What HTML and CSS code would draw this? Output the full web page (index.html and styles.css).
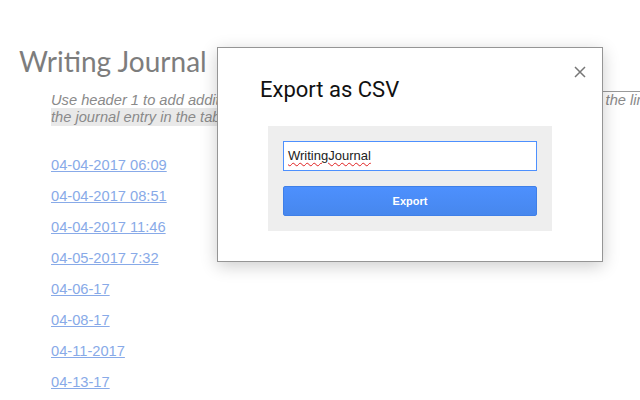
FILE: index.html
```html
<!DOCTYPE html>
<html>
<head>
<meta charset="utf-8">
<link rel="stylesheet" href="styles.css">
</head>
<body>
<div class="page">
  <h1 class="doc-title">Writing Journal</h1>
  <div class="note">
    <p class="note-line">Use header 1 to add additional entries. Each new entry, is then listed and reached by the link to</p>
    <p class="note-line"><span class="hl">the journal entry in the table of contents.</span></p>
  </div>
  <ul class="entries">
    <li><a href="#">04-04-2017 06:09</a></li>
    <li><a href="#">04-04-2017 08:51</a></li>
    <li><a href="#">04-04-2017 11:46</a></li>
    <li><a href="#">04-05-2017 7:32</a></li>
    <li><a href="#">04-06-17</a></li>
    <li><a href="#">04-08-17</a></li>
    <li><a href="#">04-11-2017</a></li>
    <li><a href="#">04-13-17</a></li>
  </ul>
</div>

<div class="dialog">
  <h2 class="dialog-title">Export as CSV</h2>
  <button class="close" aria-label="Close">
    <svg width="12" height="12" viewBox="0 0 12 12"><path d="M1 1L11 11M11 1L1 11" stroke="#777" stroke-width="1.5" fill="none"/></svg>
  </button>
  <div class="panel">
    <div class="field"><span class="misspelled">WritingJournal</span></div>
    <button class="export">Export</button>
  </div>
</div>
</body>
</html>
```
FILE: styles.css
```css
html, body {
  margin: 0;
  padding: 0;
  overflow: hidden;
  background: #fff;
}
body {
  width: 640px;
  height: 400px;
  position: relative;
  font-family: "Liberation Sans", Arial, sans-serif;
}
.page {
  padding-left: 19px;
}
.doc-title {
  margin: 0;
  padding-top: 43px;
  font-family: Lato, "DejaVu Sans", sans-serif;
  font-weight: 400;
  font-size: 28px;
  line-height: 36px;
  color: #7d7d7d;
}
.note {
  margin-left: 32px;
  margin-top: 12px;
  position: relative;
  white-space: nowrap;
  overflow: hidden;
  padding-top: 1px;
}
.note::before {
  content: "";
  position: absolute;
  left: 552px;
  right: 0;
  top: 0;
  border-top: 1px solid #9a9a9a;
}
.note-line {
  margin: 0;
  font-style: italic;
  font-size: 14.67px;
  line-height: 17px;
  color: #8a8a8a;
}
.hl {
  background: #e9e9e9;
  padding: 1px 0;
}
.entries {
  list-style: none;
  margin: 24px 0 0 32px;
  padding: 0;
}
.entries li {
  height: 31px;
  line-height: 31px;
  font-size: 14.67px;
}
.entries a {
  color: #88aae8;
  text-decoration: underline;
}
.dialog {
  position: absolute;
  left: 217px;
  top: 47px;
  width: 284px;
  padding: 29px 50px 30px 50px;
  border: 1px solid #959595;
  background: #fff;
  box-shadow: 0 4px 16px rgba(0, 0, 0, 0.2);
}
.dialog-title {
  margin: 0 0 23px -8px;
  font-family: Roboto, "Liberation Sans", sans-serif;
  font-weight: 400;
  font-size: 22px;
  line-height: 26px;
  color: #111;
}
.close {
  position: absolute;
  right: 16px;
  top: 18px;
  width: 12px;
  height: 12px;
  padding: 0;
  border: 0;
  background: none;
  display: block;
}
.close svg {
  display: block;
}
.panel {
  background: #eeeeee;
  padding: 15px;
  display: flex;
  flex-direction: column;
  gap: 15px;
}
.field {
  height: 28px;
  line-height: 28px;
  border: 1px solid #4d90fe;
  background: #fff;
  padding-left: 4px;
  font-size: 13px;
  color: #222;
}
.misspelled {
  text-decoration: underline wavy #e02020;
  text-decoration-thickness: 1px;
  text-underline-offset: 2px;
}
.export {
  height: 30px;
  margin: 0;
  border: 1px solid #3f7fe8;
  border-radius: 2px;
  background: linear-gradient(#4d90fe, #4787ed);
  color: #fff;
  font-family: "Liberation Sans", Arial, sans-serif;
  font-weight: 700;
  font-size: 11px;
  line-height: 28px;
  padding: 0;
}
```
